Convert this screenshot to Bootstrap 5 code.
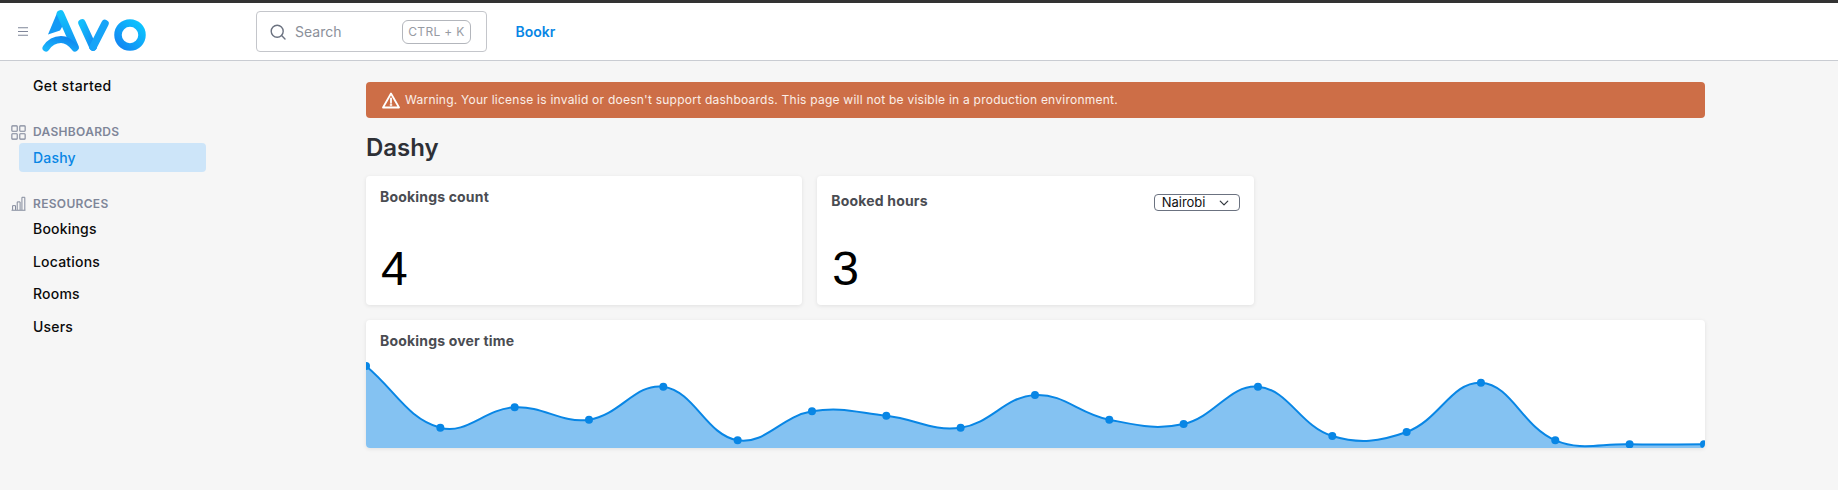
<!DOCTYPE html>
<html lang="en">
<head>
<meta charset="utf-8">
<title>Dashy</title>
<link href="https://cdn.jsdelivr.net/npm/bootstrap@5.3.0/dist/css/bootstrap.min.css" rel="stylesheet">
<style>
html,body{height:490px;overflow:hidden}
body{background:#f6f6f6;font-family:Inter,"Liberation Sans",sans-serif;font-size:14px;color:#000}
.topstrip{height:3px;background:#333}
.appbar{height:57px;background:#fff;border-bottom:1px solid #c9ccd2;box-sizing:content-box}
.burger{width:10px;margin-left:18px;margin-right:14px;color:#7f8699}
.logo-svg{width:104px;height:44px;margin-top:-1px}
.searchbox{width:231px;height:41px;margin-left:110px;background:#fff;border:1px solid #c4c6cb;border-radius:4px;padding:0 15px 0 13px;color:#8b909a}
.searchbox svg{width:16px;height:16px;margin-right:9px;flex:none}
.keyhint{height:24px;width:69px;border:1px solid #b3b6bc;border-radius:6px;font-size:12px;letter-spacing:.35px;color:#979ba3;margin-left:auto}
.brandlink{margin-left:28.5px;color:#0886e5;font-weight:600;text-decoration:none}
.sidepane{width:256px;flex:none;padding-top:10px}
.sideitem{display:block;margin:3.67px 0 0 19px;width:187px;height:29px;line-height:29px;padding-left:14px;border-radius:4px;color:#0b0b0b;font-weight:500;letter-spacing:.2px;text-decoration:none}
.sideitem.current{background:#cde5f9;color:#0886e5;margin-top:2px}
.sideitem.lead-item{margin-top:1.5px}
.sideitem.top-item{margin-top:0;letter-spacing:.35px}
.sidehead{height:18px;margin:23px 0 0 11px;font-size:12px;font-weight:600;letter-spacing:.32px;color:#7f8699;text-transform:uppercase}
.sidehead.second{margin-top:22.5px}
.sidehead svg{width:15px;height:15px;margin-right:7px;flex:none}
.mainpane{flex:1;min-width:0;padding:21px 133px 0 110px}
.licence{height:36px;margin:0;padding:0 16px;background:#cd6e47;color:#fbeee8;border:0;border-radius:4px;font-size:12px;letter-spacing:.24px}
.licence svg{width:18px;height:17px;margin-right:5px;flex:none}
.pagetitle{font-size:24px;font-weight:600;color:#2e3036;line-height:29px;margin:15px 0 14px}
.tilegrid{display:grid;grid-template-columns:repeat(3,1fr);gap:15px}
.tile{border:0;border-radius:4px;background:#fff;box-shadow:0 1px 4px rgba(0,0,0,.09);height:129px;overflow:hidden}
.tile.wide{grid-column:1/4;height:128px}
.tiletitle{font-size:14px;font-weight:700;color:#4a4c52;letter-spacing:.18px;line-height:20px;margin:0}
.tilebody{padding:11px 14px 0}
.tilebody.lowered{padding-top:15px}
.bignum{font-family:"Liberation Sans",Arial,sans-serif;font-size:48px;line-height:56px;color:#000;padding-left:1px;margin-top:34px}
.bignum.alt{margin-top:30px}
.picker{width:86px;height:17px;padding:0 22px 0 7px;margin-top:3px;font-size:13px;line-height:15px;color:#111;border:1px solid #6b7280;border-radius:4px;background-position:right 9px center;background-size:12px 10px;min-height:0}
.areachart{display:block;width:1339px;height:88px}
</style>
</head>
<body>
<div class="topstrip"></div>
<header class="appbar d-flex align-items-center">
  <svg class="burger" viewBox="0 0 10 9"><path d="M0 .75h10M0 4.500h10M0 8.250h10" stroke="currentColor" stroke-width="1.2" fill="none"/></svg>
  <svg class="logo-svg" viewBox="42 9 104 44" aria-label="Avo logo">
    <defs>
      <linearGradient id="gA" x1="0" y1="0" x2="0" y2="1"><stop offset="0" stop-color="#12c2fb"/><stop offset="1" stop-color="#1491f3"/></linearGradient>
      <linearGradient id="gB" x1="0" y1="1" x2="1" y2="0"><stop offset="0" stop-color="#19b4fb"/><stop offset="1" stop-color="#0f84ee"/></linearGradient>
      <linearGradient id="gO" x1="0" y1="1" x2="1" y2="0"><stop offset="0" stop-color="#1285f2"/><stop offset="1" stop-color="#0cc6ff"/></linearGradient>
      <linearGradient id="gV" x1="0" y1="0" x2="1" y2="1"><stop offset="0" stop-color="#12bdfb"/><stop offset="1" stop-color="#1389f0"/></linearGradient>
    </defs>
    <path d="M57 13L48 34.500L60 30.500L66 20Z" fill="#1399f5"/>
    <path d="M60.500 14L75 47" stroke="url(#gA)" stroke-width="7.500" stroke-linecap="round" fill="none"/>
    <path d="M46 48C50 42 56 39.500 61 39.500C67 39.500 71 43 75 48" stroke="url(#gB)" stroke-width="7" stroke-linecap="round" fill="none"/>
    <path d="M82 23L93 47" stroke="url(#gV)" stroke-width="7.500" stroke-linecap="round" fill="none"/>
    <path d="M93 47L105 23.500" stroke="#16a4f8" stroke-width="7.500" stroke-linecap="round" fill="none"/>
    <circle cx="130" cy="35" r="12" fill="none" stroke="url(#gO)" stroke-width="7.500"/>
  </svg>
  <div class="searchbox d-flex align-items-center">
    <svg viewBox="0 0 16 16" fill="none" stroke="#6b7280" stroke-width="1.4"><circle cx="7.200" cy="7.200" r="6"/><path d="M11.600 11.600L15 15" stroke-linecap="round"/></svg>
    <span>Search</span>
    <span class="keyhint d-flex align-items-center justify-content-center">CTRL + K</span>
  </div>
  <a class="brandlink" href="#">Bookr</a>
</header>
<div class="d-flex">
  <nav class="sidepane">
    <a class="sideitem top-item" href="#">Get started</a>
    <div class="sidehead d-flex align-items-center">
      <svg viewBox="0 0 14 14" fill="none" stroke="#7f8699" stroke-width="1"><rect x=".8" y=".8" width="5" height="5" rx=".6"/><rect x="8.200" y=".8" width="5" height="5" rx=".6"/><rect x=".8" y="8.200" width="5" height="5" rx=".6"/><rect x="8.200" y="8.200" width="5" height="5" rx=".6"/></svg>
      Dashboards
    </div>
    <a class="sideitem current" href="#">Dashy</a>
    <div class="sidehead second d-flex align-items-center">
      <svg viewBox="0 0 14 14" fill="none" stroke="#7f8699" stroke-width=".9"><path d="M.5 13.300h13M1.500 13V9h2.700v4M5.800 13V5.500h2.700V13M10.200 13V1.200h2.700V13"/></svg>
      Resources
    </div>
    <a class="sideitem lead-item" href="#">Bookings</a>
    <a class="sideitem" href="#">Locations</a>
    <a class="sideitem" href="#">Rooms</a>
    <a class="sideitem" href="#">Users</a>
  </nav>
  <main class="mainpane">
    <div class="alert licence d-flex align-items-center" role="alert">
      <svg viewBox="0 0 18 17" fill="none" stroke="#fff" stroke-width="1.8" stroke-linejoin="round"><path d="M9 1.500L17 15.500H1Z"/><path d="M9 6.300v4.300" stroke-linecap="round"/><circle cx="9" cy="12.900" r=".4"/></svg>
      <span>Warning. Your license is invalid or doesn't support dashboards. This page will not be visible in a production environment.</span>
    </div>
    <h1 class="pagetitle">Dashy</h1>
    <div class="tilegrid">
      <div class="card tile">
        <div class="tilebody">
          <h2 class="tiletitle">Bookings count</h2>
          <div class="bignum">4</div>
        </div>
      </div>
      <div class="card tile">
        <div class="tilebody lowered">
          <div class="d-flex justify-content-between align-items-start">
            <h2 class="tiletitle">Booked hours</h2>
            <select class="form-select picker" aria-label="City"><option>Nairobi</option></select>
          </div>
          <div class="bignum alt">3</div>
        </div>
      </div>
      <div class="card tile wide">
        <div class="tilebody" style="height:40px"><h2 class="tiletitle">Bookings over time</h2></div>
        <svg class="areachart" id="areachart" viewBox="0 0 1339 88">
          <path id="areafill" fill="#84c2f2"/>
          <path id="areastroke" fill="none" stroke="#0886e5" stroke-width="2"/>
          <g id="areadots" fill="#0886e5"></g>
        </svg>
      </div>
    </div>
  </main>
</div>
<script>
var ys=[6,67.7,47.3,59.7,26.7,80.3,51.3,55.7,67.7,35,59.7,64,26.7,76,72,22.7,80.3,84.3,84.3];
var pts=ys.map(function(y,i){return [i*74.33,y];});
var d='M'+pts[0][0]+' '+pts[0][1],t=0.4;
function cps(i){
  var p=pts[Math.max(i-1,0)],c=pts[i],n=pts[Math.min(i+1,pts.length-1)];
  var d1=Math.hypot(c[0]-p[0],c[1]-p[1]),d2=Math.hypot(n[0]-c[0],n[1]-c[1]),s=d1+d2||1;
  var a=t*d1/s,b=t*d2/s;
  return {pre:[c[0]-a*(n[0]-p[0]),c[1]-a*(n[1]-p[1])],post:[c[0]+b*(n[0]-p[0]),c[1]+b*(n[1]-p[1])]};
}
for(var i=0;i<pts.length-1;i++){
  var A=cps(i).post,B=cps(i+1).pre,E=pts[i+1];
  d+=' C'+A[0].toFixed(1)+' '+A[1].toFixed(1)+' '+B[0].toFixed(1)+' '+B[1].toFixed(1)+' '+E[0].toFixed(1)+' '+E[1].toFixed(1);
}
document.getElementById('areastroke').setAttribute('d',d);
document.getElementById('areafill').setAttribute('d',d+' L'+pts[pts.length-1][0].toFixed(1)+' 88 L0 88Z');
var g=document.getElementById('areadots');
pts.forEach(function(p){var c=document.createElementNS('http://www.w3.org/2000/svg','circle');c.setAttribute('cx',p[0]);c.setAttribute('cy',p[1]);c.setAttribute('r',4);g.appendChild(c);});
</script>
<script src="https://cdn.jsdelivr.net/npm/bootstrap@5.3.0/dist/js/bootstrap.bundle.min.js"></script>
</body>
</html>
